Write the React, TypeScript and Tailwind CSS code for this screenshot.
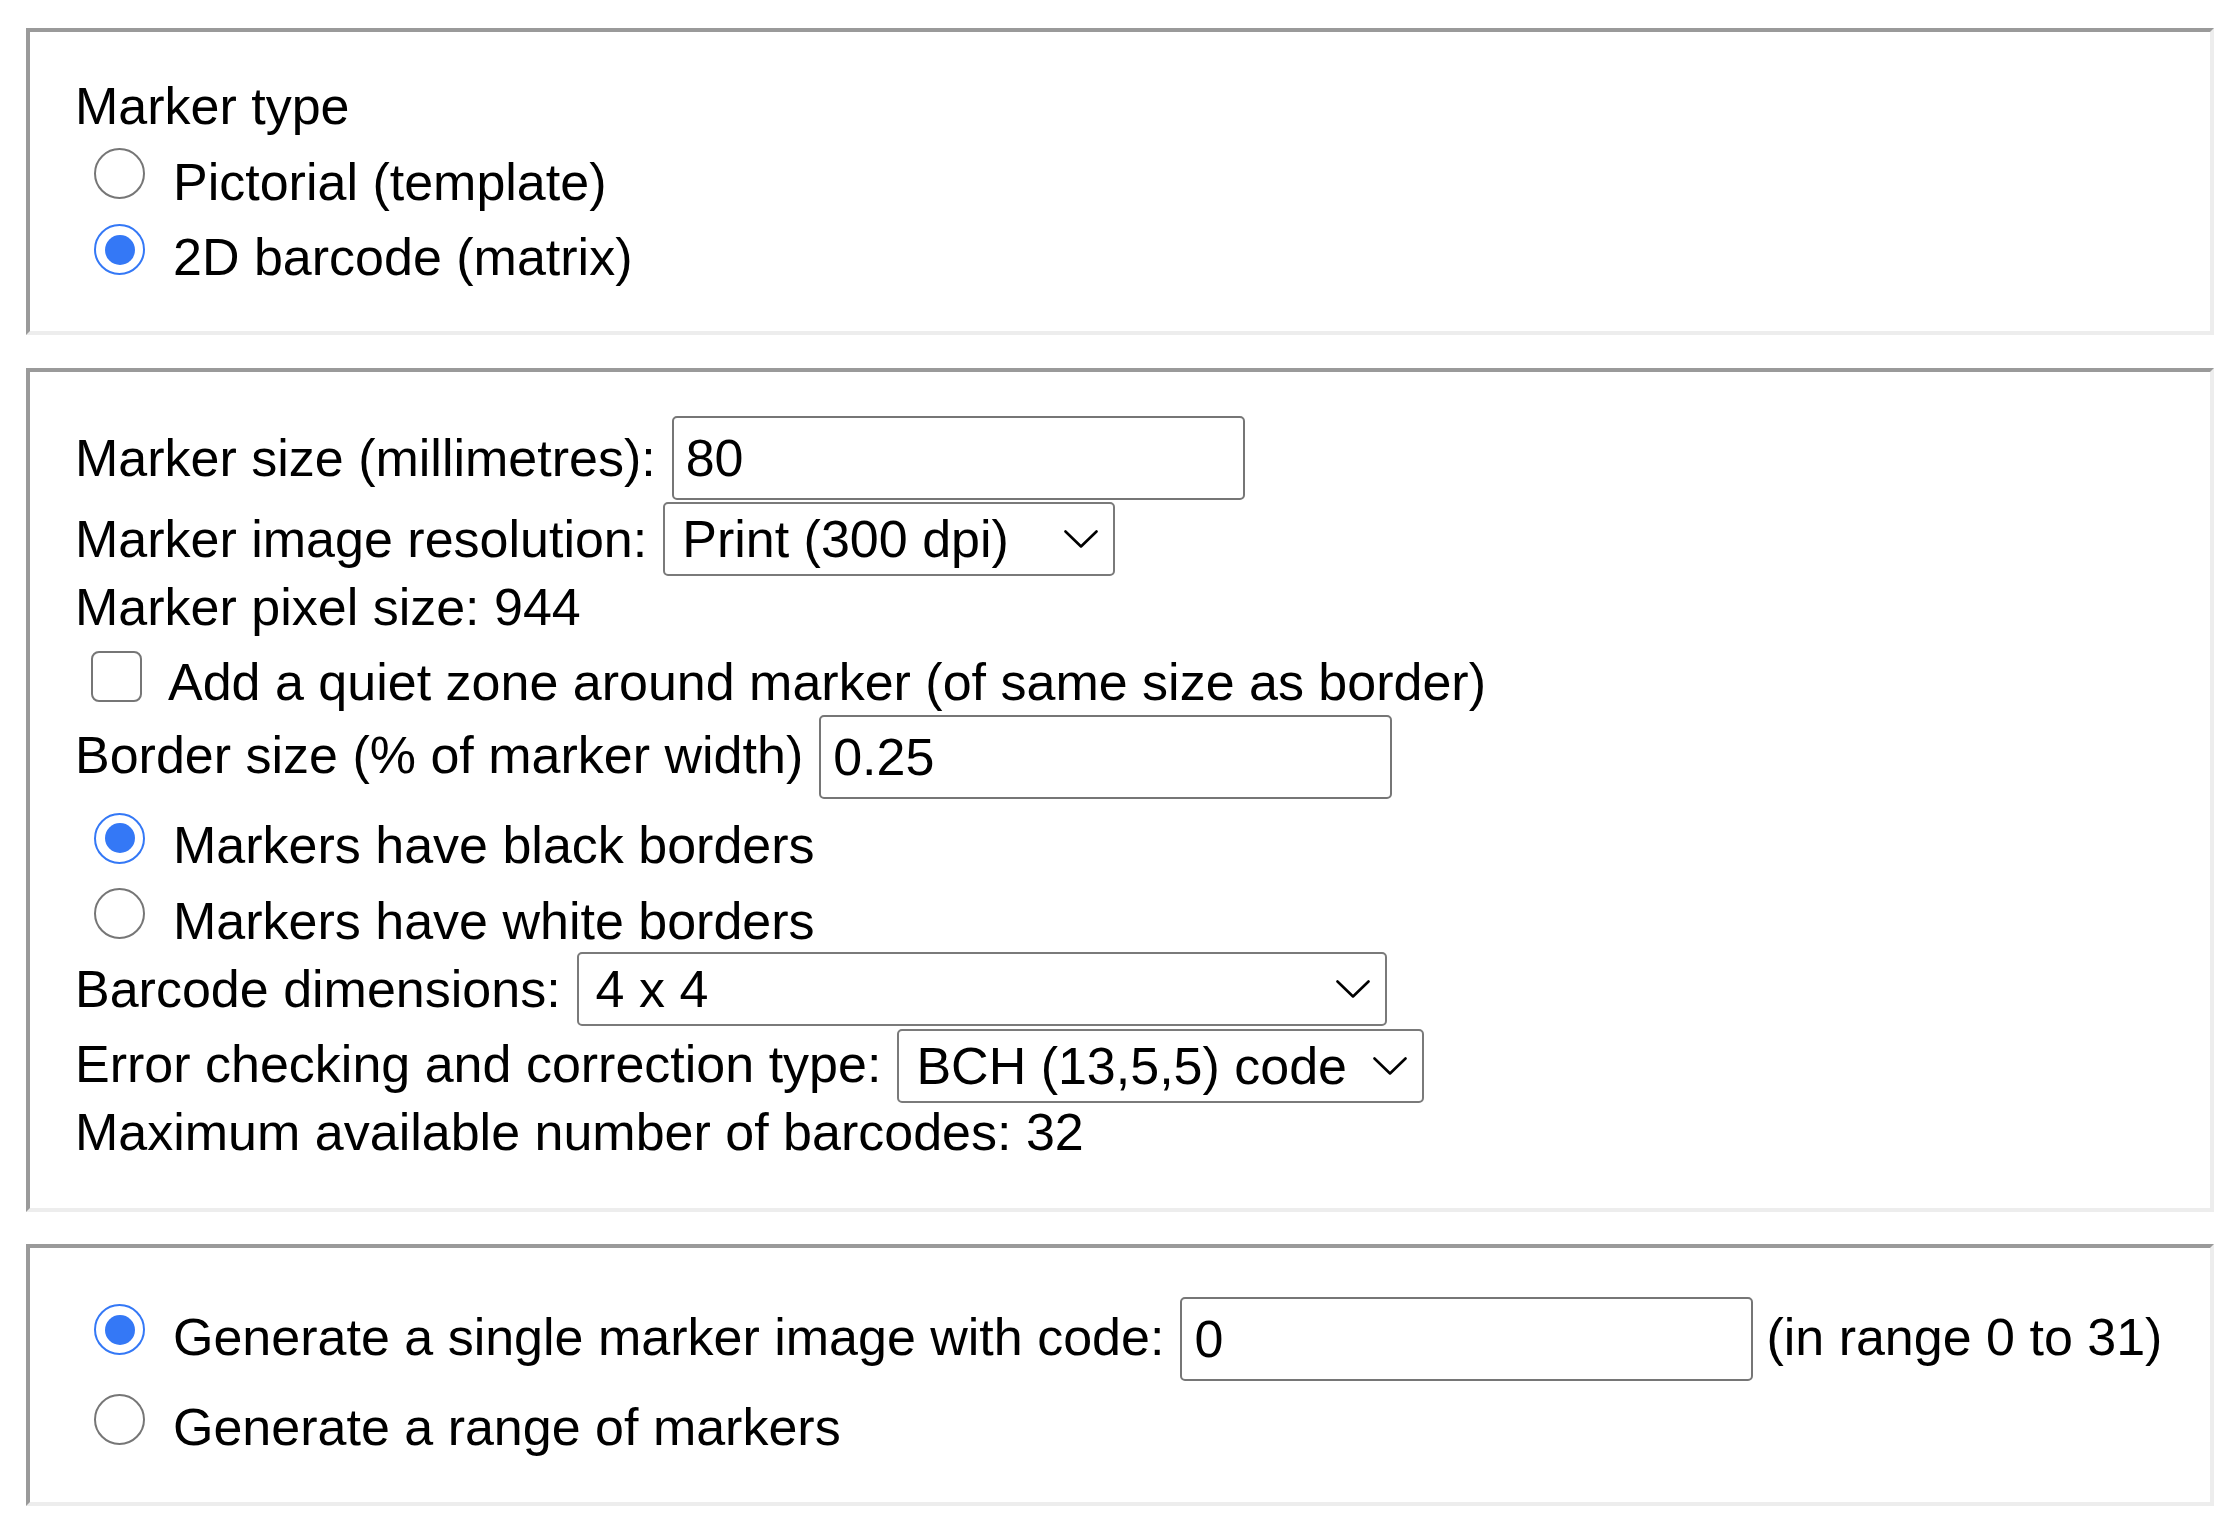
import React from 'react';
import clsx from 'clsx';

function Radio({ checked, className }: { checked?: boolean; className?: string }) {
  if (checked) {
    return (
      <span
        className={clsx(
          'flex h-[51px] w-[51px] shrink-0 items-center justify-center rounded-full border-2 border-[#3478f6] bg-white',
          className
        )}
      >
        <span className="h-[30px] w-[30px] rounded-full bg-[#3478f6]" />
      </span>
    );
  }
  return (
    <span
      className={clsx('h-[51px] w-[51px] shrink-0 rounded-full border-2 border-[#767676] bg-white', className)}
    />
  );
}

function Chevron() {
  return (
    <svg width="34" height="18" viewBox="0 0 34 18" className="shrink-0">
      <polyline points="1.5,1.5 17,16.5 32.5,1.5" fill="none" stroke="#000" strokeWidth="2.6" strokeLinecap="round" strokeLinejoin="round" />
    </svg>
  );
}

function Select({ value, className }: { value: string; className?: string }) {
  return (
    <div
      className={clsx(
        'ml-[16px] flex h-[74px] shrink-0 items-center justify-between rounded-[5px] border-2 border-[#7a7a7a] bg-white pl-[17px] pr-[15px]',
        className
      )}
    >
      <span className="whitespace-nowrap">{value}</span>
      <Chevron />
    </div>
  );
}

function TextInput({ value, className }: { value: string; className?: string }) {
  return (
    <input
      readOnly
      value={value}
      className={clsx(
        'ml-[16px] h-[84px] w-[573px] shrink-0 rounded-[5px] border-2 border-[#767676] bg-white pl-[12px] text-black outline-none',
        className
      )}
    />
  );
}

function Fieldset({ className, children }: { className?: string; children: React.ReactNode }) {
  return (
    <fieldset
      className={clsx(
        'border-4 border-t-[#9a9a9a] border-l-[#9a9a9a] border-r-[#ededed] border-b-[#ededed] pl-[45px]',
        className
      )}
    >
      {children}
    </fieldset>
  );
}

export default function App() {
  return (
    <div className="min-h-screen bg-white pt-[28px] pl-[26px] pr-[20px] font-['Liberation_Sans',Arial,sans-serif] text-[52px] leading-[60px] text-black">
      {/* Marker type */}
      <Fieldset className="pt-[36px] pb-[36px]">
        <div className="flex h-[76px] items-center">Marker type</div>
        <div className="flex h-[75px] items-center">
          <Radio className="ml-[19px] mr-[28px] mb-[16px]" />
          <span>Pictorial (template)</span>
        </div>
        <div className="flex h-[76px] items-center">
          <Radio checked className="ml-[19px] mr-[28px] mb-[15px]" />
          <span>2D barcode (matrix)</span>
        </div>
      </Fieldset>

      {/* Marker settings */}
      <Fieldset className="mt-[33px] pt-[43px] pb-[53px]">
        <div className="flex h-[86px] items-center">
          <span className="whitespace-nowrap">Marker size (millimetres):</span>
          <TextInput value="80" />
        </div>
        <div className="flex h-[76px] items-center">
          <span className="whitespace-nowrap">Marker image resolution:</span>
          <Select value="Print (300 dpi)" className="w-[452px]" />
        </div>
        <div className="flex h-[60px] items-center">Marker pixel size: 944</div>
        <div className="flex h-[90px] items-center">
          <span className="ml-[16px] mr-[26px] mb-[12px] h-[51px] w-[51px] shrink-0 rounded-[8px] border-2 border-[#767676] bg-white" />
          <span className="whitespace-nowrap">Add a quiet zone around marker (of same size as border)</span>
        </div>
        <div className="flex h-[56px] items-center">
          <span className="whitespace-nowrap">Border size (% of marker width)</span>
          <TextInput value="0.25" className="mt-[4px]" />
        </div>
        <div className="mt-[24px] flex h-[76px] items-center">
          <Radio checked className="ml-[19px] mr-[28px] mb-[14px]" />
          <span>Markers have black borders</span>
        </div>
        <div className="flex h-[76px] items-center">
          <Radio className="ml-[19px] mr-[28px] mb-[15px]" />
          <span>Markers have white borders</span>
        </div>
        <div className="flex h-[60px] items-center">
          <span className="whitespace-nowrap">Barcode dimensions:</span>
          <Select value="4 x 4" className="w-[810px]" />
        </div>
        <div className="flex h-[90px] items-center">
          <span className="whitespace-nowrap">Error checking and correction type:</span>
          <Select value="BCH (13,5,5) code" className="mt-[4px] w-[527px]" />
        </div>
        <div className="flex h-[46px] items-center">Maximum available number of barcodes: 32</div>
      </Fieldset>

      {/* Output */}
      <Fieldset className="mt-[32px] pt-[46px] pb-[37px]">
        <div className="flex h-[86px] items-center">
          <Radio checked className="ml-[19px] mr-[28px] mb-[15px]" />
          <span className="whitespace-nowrap">Generate a single marker image with code:</span>
          <TextInput value="0" className="mt-[4px]" />
          <span className="ml-[13px] whitespace-nowrap">(in range 0 to 31)</span>
        </div>
        <div className="mt-[9px] flex h-[76px] items-center">
          <Radio className="ml-[19px] mr-[28px] mb-[15px]" />
          <span>Generate a range of markers</span>
        </div>
      </Fieldset>
    </div>
  );
}
